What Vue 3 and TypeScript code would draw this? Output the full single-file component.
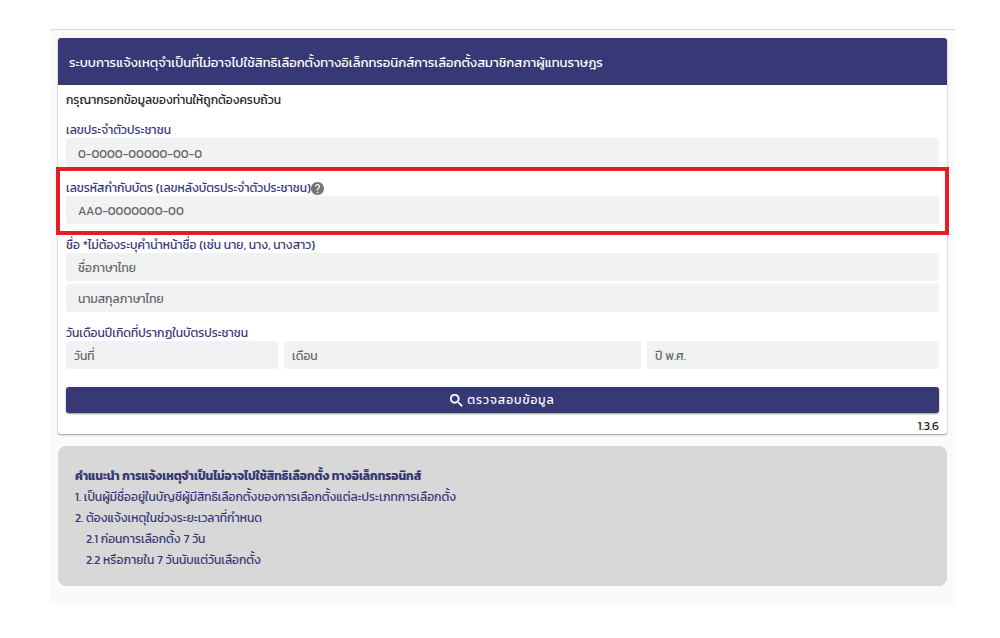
<script setup lang="ts">
import { ref } from 'vue'

const citizenId = ref('')
const laserCode = ref('')
const firstName = ref('')
const lastName = ref('')
const birth = ref<Record<string, string>>({ day: '', month: '', year: '' })

const birthParts = [
  { key: 'day', label: 'วันที่' },
  { key: 'month', label: 'เดือน' },
  { key: 'year', label: 'ปี พ.ศ.' },
]
</script>

<template>
  <main class="page">
    <section class="card">
      <h1 class="card-title">ระบบการแจ้งเหตุจำเป็นที่ไม่อาจไปใช้สิทธิเลือกตั้งทางอิเล็กทรอนิกส์การเลือกตั้งสมาชิกสภาผู้แทนราษฎร</h1>
      <form class="form" @submit.prevent>
        <p class="intro">กรุณากรอกข้อมูลของท่านให้ถูกต้องครบถ้วน</p>

        <div class="field">
          <label class="label" for="citizen">เลขประจำตัวประชาชน</label>
          <input id="citizen" v-model="citizenId" class="input wide" type="text" placeholder="0-0000-00000-00-0" />
        </div>

        <div class="field marked">
          <div class="label-row">
            <label class="label" for="laser">เลขรหัสกำกับบัตร (เลขหลังบัตรประจำตัวประชาชน)</label>
            <button class="help" type="button" aria-label="คำอธิบาย">
              <svg viewBox="2 2 20 20" width="13" height="13" aria-hidden="true">
                <path fill="currentColor" d="M12 2C6.480 2 2 6.480 2 12s4.480 10 10 10 10-4.480 10-10S17.520 2 12 2zm1 17h-2v-2h2v2zm2.070-7.750l-.9.920C13.450 12.900 13 13.500 13 15h-2v-.5c0-1.100.45-2.100 1.170-2.830l1.240-1.260c.37-.36.59-.86.59-1.410 0-1.100-.9-2-2-2s-2 .9-2 2H8c0-2.210 1.790-4 4-4s4 1.790 4 4c0 .88-.36 1.680-.93 2.250z" />
              </svg>
            </button>
          </div>
          <input id="laser" v-model="laserCode" class="input" type="text" placeholder="AA0-0000000-00" />
        </div>

        <div class="field">
          <label class="label" for="first">ชื่อ *ไม่ต้องระบุคำนำหน้าชื่อ (เช่น นาย, นาง, นางสาว)</label>
          <div class="stack">
            <input id="first" v-model="firstName" class="input" type="text" placeholder="ชื่อภาษาไทย" />
            <input v-model="lastName" class="input" type="text" placeholder="นามสกุลภาษาไทย" aria-label="นามสกุลภาษาไทย" />
          </div>
        </div>

        <fieldset class="field birth">
          <legend class="label">วันเดือนปีเกิดที่ปรากฏในบัตรประชาชน</legend>
          <div class="birth-row">
            <input
              v-for="part in birthParts"
              :key="part.key"
              v-model="birth[part.key]"
              class="input compact"
              type="text"
              :placeholder="part.label"
              :aria-label="part.label"
            />
          </div>
        </fieldset>

        <button class="submit" type="submit">
          <svg viewBox="3 3 18 18" width="13" height="13" aria-hidden="true">
            <path fill="currentColor" stroke="currentColor" stroke-width="0.6" d="M15.500 14h-.79l-.28-.27A6.471 6.471 0 0 0 16 9.500 6.500 6.500 0 1 0 9.500 16c1.610 0 3.090-.59 4.230-1.570l.27.28v.79l5 4.990L20.490 19l-4.990-5zm-6 0C7.010 14 5 11.990 5 9.500S7.010 5 9.500 5 14 7.010 14 9.500 11.990 14 9.500 14z" />
          </svg>
          <span>ตรวจสอบข้อมูล</span>
        </button>
        <p class="version">1.3.6</p>
      </form>
    </section>

    <section class="notes">
      <h2 class="notes-title">คำแนะนำ การแจ้งเหตุจำเป็นไม่อาจไปใช้สิทธิเลือกตั้ง ทางอิเล็กทรอนิกส์</h2>
      <p>1. เป็นผู้มีชื่ออยู่ในบัญชีผู้มีสิทธิเลือกตั้งของการเลือกตั้งแต่ละประเภทการเลือกตั้ง</p>
      <p>2. ต้องแจ้งเหตุในช่วงระยะเวลาที่กำหนด</p>
      <p class="sub">2.1 ก่อนการเลือกตั้ง 7 วัน</p>
      <p class="sub">2.2 หรือภายใน 7 วันนับแต่วันเลือกตั้ง</p>
    </section>
  </main>
</template>

<style>
body {
  background: #fff;
}
</style>

<style scoped>
* {
  box-sizing: border-box;
}

.page {
  margin: 29px 45px 34px 50px;
  padding: 8px 8px 18px;
  border-top: 1px solid #dadada;
  background: #fafafa;
  color: #222;
  font-family: Kanit, Prompt, "Noto Sans Thai", Inter, "Noto Sans", sans-serif;
  font-size: 12px;
  line-height: 16px;
}

h1,
h2,
p {
  margin: 0;
}

.card {
  border-radius: 3px;
  background: #fff;
  box-shadow: 0 1px 2px rgba(0, 0, 0, 0.4);
}

.card-title {
  padding: 13px 11px 11px;
  border-radius: 3px 3px 0 0;
  background: #373876;
  color: #fff;
  font-size: 13px;
  font-weight: 400;
  line-height: 23px;
  white-space: nowrap;
}

.form {
  display: flex;
  flex-direction: column;
  padding: 7px 8px 0;
}

.intro {
  margin-bottom: 14px;
}

.field {
  display: flex;
  flex-direction: column;
  margin-bottom: 13px;
}

.label {
  color: #373876;
  white-space: nowrap;
}

.label-row {
  display: flex;
  align-items: center;
}

.marked {
  position: relative;
}

.marked::after {
  content: "";
  position: absolute;
  inset: -13px -10px -11px;
  border: 4px solid #e51d25;
  pointer-events: none;
}

.help {
  display: flex;
  padding: 0;
  border: 0;
  background: none;
  color: #757575;
}

.input {
  width: 100%;
  min-width: 0;
  height: 28px;
  padding: 2px 12px 0;
  border: 0;
  border-radius: 3px;
  background: #f1f2f4;
  color: #333;
  font-family: inherit;
  font-size: 12px;
}

.input::placeholder {
  color: #666;
  opacity: 1;
}

.wide {
  height: 29px;
}

.compact {
  padding: 2px 8px 0;
}

.stack {
  display: grid;
  gap: 3px;
}

.birth {
  display: block;
  min-width: 0;
  margin: 0 0 18px;
  padding: 0;
  border: 0;
}

.birth .label {
  padding: 0;
}

.birth-row {
  display: grid;
  grid-template-columns: 212fr 357fr 292fr;
  gap: 6px;
}

.submit {
  display: flex;
  align-items: center;
  justify-content: center;
  gap: 4px;
  height: 26px;
  padding: 0;
  border: 0;
  border-radius: 3px;
  background: #373876;
  box-shadow: 0 1px 2px rgba(0, 0, 0, 0.4);
  color: #fff;
  font-family: inherit;
  font-size: 12px;
  letter-spacing: 1px;
}

.version {
  padding: 5px 0 0;
  text-align: right;
}

.notes {
  margin-top: 12px;
  padding: 20px 17px 15px;
  border-radius: 8px;
  background: #d8d8d8;
  color: #373876;
  line-height: 21px;
}

.notes-title {
  font-size: 12px;
  font-weight: 700;
}

.sub {
  padding-left: 11px;
}
</style>
